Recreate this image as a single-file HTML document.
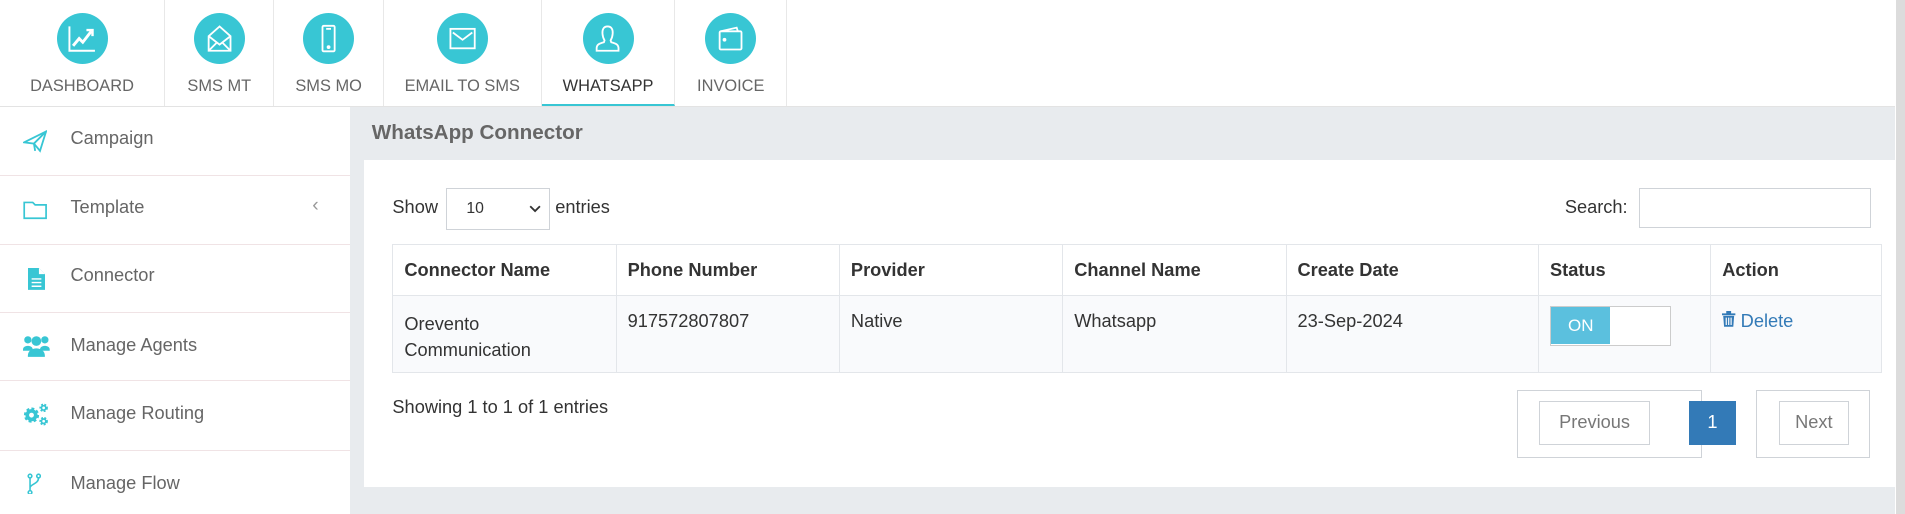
<!DOCTYPE html>
<html><head><meta charset="utf-8"><style>
html,body{margin:0;padding:0;}
body{width:1568px;height:423px;zoom:1.21492;overflow:hidden;position:relative;font-family:"Liberation Sans",Arial,sans-serif;background:#fff;}
.abs{position:absolute;}
.nav{left:0;top:0;width:1560px;height:87px;border-bottom:1px solid #e3e3e3;background:#fff;}
.tab{position:absolute;top:0;height:87px;border-right:1px solid #e8e8e8;text-align:center;}
.tab .c{position:absolute;left:50%;top:11px;width:42px;height:42px;margin-left:-21px;border-radius:50%;background:#38c6d4;}
.tab .c svg{position:absolute;left:9px;top:9px;}
.tab .l{position:absolute;left:0;right:0;top:63px;font-size:13.5px;color:#666;}
.side{left:0;top:88px;width:288px;height:335px;background:#fff;border-right:1px solid #e3e3e3;}
.it{position:absolute;left:0;width:288px;border-bottom:1px solid #f0e3e5;}
.it span{position:absolute;left:58px;font-size:15px;color:#666;}
.it svg{position:absolute;left:19px;}
.main{left:288px;top:88px;width:1272px;height:335px;background:#e8ebee;}
.panel{left:300px;top:132px;width:1260px;height:269px;background:#fff;}
.t{font-size:15px;color:#333;position:absolute;}
table{position:absolute;left:323px;top:201px;width:1226px;border-collapse:collapse;font-size:15px;color:#333;}
td,th{border:1px solid #e3e6ea;text-align:left;vertical-align:top;padding:0 9px;}
th{height:41px;vertical-align:middle;font-weight:bold;}
tbody td{background:#f9fafc;height:63px;padding-top:12px;box-sizing:border-box;line-height:22px;}
.box{position:absolute;border:1px solid #cfd3d8;box-sizing:border-box;}
</style></head><body>
<div class="abs nav">
 <div class="tab" style="left:0;width:135px"><div class="c"><svg width="24" height="24" viewBox="0 0 24 24" fill="none" stroke="#fff" stroke-width="1.6"><path d="M2 2V22H23"/><path d="M5 18L10 12L13 15L20 6" stroke-width="2.4"/><path d="M16 5H21V10" stroke-width="2"/></svg></div><div class="l">DASHBOARD</div></div>
 <div class="tab" style="left:136px;width:89px"><div class="c"><svg width="24" height="24" viewBox="0 0 24 24" fill="none" stroke="#fff" stroke-width="1.5"><path d="M3 10L12 2L21 10V22H3Z"/><path d="M3 10L12 17L21 10M3 22L10 15M21 22L14 15"/></svg></div><div class="l">SMS MT</div></div>
 <div class="tab" style="left:226px;width:89px"><div class="c"><svg width="24" height="24" viewBox="0 0 24 24" fill="none" stroke="#fff" stroke-width="1.5"><rect x="7" y="1.5" width="10" height="21" rx="1"/><path d="M10 4H14"/><circle cx="12" cy="19" r="0.8" fill="#fff"/></svg></div><div class="l">SMS MO</div></div>
 <div class="tab" style="left:316px;width:129px"><div class="c"><svg width="24" height="24" viewBox="0 0 24 24" fill="none" stroke="#fff" stroke-width="1.5"><rect x="2" y="4" width="20" height="16"/><path d="M4 7L12 13L20 7"/></svg></div><div class="l">EMAIL TO SMS</div></div>
 <div class="tab" style="left:446px;width:109px;border-bottom:2px solid #38c6d4;height:86px"><div class="c"><svg width="24" height="24" viewBox="0 0 24 24" fill="none" stroke="#fff" stroke-width="1.5"><path d="M12 2C8.5 2 7.5 5 7.8 8C8 11 9.5 13.5 9.5 13.5L9 15C5 16 3 17 3 20V22H21V20C21 17 19 16 15 15L14.5 13.5C14.5 13.5 16 11 16.2 8C16.5 5 15.5 2 12 2Z"/></svg></div><div class="l" style="color:#333">WHATSAPP</div></div>
 <div class="tab" style="left:556px;width:91px"><div class="c"><svg width="24" height="24" viewBox="0 0 24 24" fill="none" stroke="#fff" stroke-width="1.5"><path d="M4 6L17 3L18 6"/><rect x="3" y="6" width="18" height="15" rx="1"/><circle cx="7" cy="13" r="0.8" fill="#fff"/></svg></div><div class="l">INVOICE</div></div>
</div>
<div class="abs side">
 <div class="it" style="top:0;height:56px"><svg style="top:18px" width="20" height="20" viewBox="0 0 20 20" fill="none" stroke="#38c6d4" stroke-width="1.5"><path d="M1 11L19 2L14 18L9 12Z"/><path d="M9 12L19 2M9 12L10 18"/></svg><span style="top:17px">Campaign</span></div>
 <div class="it" style="top:57px;height:56px"><svg style="top:20px" width="20" height="16" viewBox="0 0 20 16" fill="none" stroke="#38c6d4" stroke-width="1.4"><path d="M1 2H8L10 4H19V15H1Z"/></svg><span style="top:17px">Template</span><span style="left:257px;top:15px;color:#999;font-size:16px">&#8249;</span></div>
 <div class="it" style="top:114px;height:55px"><svg style="top:19px;left:23px" width="14" height="18" viewBox="0 0 14 18"><path d="M0 0H9L14 5V18H0Z" fill="#38c6d4"/><path d="M9 0V5H14" fill="#fff"/><path d="M3 9H11M3 12H11M3 15H11" stroke="#fff" stroke-width="1.2"/></svg><span style="top:16px">Connector</span></div>
 <div class="it" style="top:170px;height:55px"><svg style="top:18px" width="22" height="18" viewBox="0 0 22 18" fill="#38c6d4"><circle cx="4" cy="4" r="3"/><circle cx="18" cy="4" r="3"/><circle cx="11" cy="5" r="4"/><path d="M0 12C0 8 8 8 8 12V13H0Z"/><path d="M14 12C14 8 22 8 22 12V13H14Z"/><path d="M4 17C4 9 18 9 18 17V18H4Z"/></svg><span style="top:18px">Manage Agents</span></div>
 <div class="it" style="top:226px;height:56px"><svg style="top:18px" width="22" height="20" viewBox="0 0 22 20" fill="none" stroke="#38c6d4"><circle cx="7" cy="10" r="4.5" stroke-width="3.5" stroke-dasharray="2 1.5"/><circle cx="7" cy="10" r="3.5" stroke-width="3"/><circle cx="17" cy="4" r="2.5" stroke-width="2" stroke-dasharray="1.4 1"/><circle cx="17" cy="4" r="1.8" stroke-width="1.4"/><circle cx="17" cy="15" r="2.5" stroke-width="2" stroke-dasharray="1.4 1"/><circle cx="17" cy="15" r="1.8" stroke-width="1.4"/></svg><span style="top:18px">Manage Routing</span></div>
 <div class="it" style="top:283px;height:52px;border:none"><svg style="top:18px;left:22px" width="12" height="18" viewBox="0 0 12 18" fill="none" stroke="#38c6d4" stroke-width="1.3"><circle cx="2.5" cy="2.5" r="1.5"/><circle cx="9.5" cy="2.5" r="1.5"/><circle cx="2.5" cy="16" r="1.5"/><path d="M2.5 4V14.5M9.5 4C9.5 9 3 9 2.5 12"/></svg><span style="top:18px">Manage Flow</span></div>
</div>
<div class="abs" style="left:1561px;top:0;width:7px;height:423px;background:#dcdcdc"></div>
<div class="abs main"></div>
<div class="abs" style="left:306px;top:100px;font-size:17px;font-weight:bold;color:#666">WhatsApp Connector</div>
<div class="abs panel"></div>
<div class="t" style="left:323px;top:162px">Show</div>
<div class="box" style="left:367px;top:155px;width:86px;height:34px;"><span style="position:absolute;left:16px;top:9px;font-size:13px;color:#333">10</span><svg style="position:absolute;left:68px;top:13px" width="10" height="7" viewBox="0 0 10 7" fill="none" stroke="#333" stroke-width="1.5"><path d="M1 1L5 5L9 1"/></svg></div>
<div class="t" style="left:457px;top:162px">entries</div>
<div class="t" style="left:1288px;top:162px">Search:</div>
<div class="box" style="left:1349px;top:155px;width:191px;height:33px"></div>
<table>
<thead><tr><th style="width:165px">Connector Name</th><th style="width:165px">Phone Number</th><th style="width:165px">Provider</th><th style="width:165px">Channel Name</th><th style="width:189px">Create Date</th><th style="width:123px">Status</th><th>Action</th></tr></thead>
<tbody><tr><td>Orevento<br>Communication</td><td style="padding-top:10px">917572807807</td><td style="padding-top:10px">Native</td><td style="padding-top:10px">Whatsapp</td><td style="padding-top:10px">23-Sep-2024</td><td style="padding-top:8px"><div style="position:relative;width:100px;height:33px;border:1px solid #ccc;background:#fff;box-sizing:border-box"><div style="position:absolute;left:0;top:0;width:49px;height:31px;background:#5bc0de;color:#fff;font-size:14px;text-align:center;line-height:31px">ON</div></div></td><td style="padding-top:10px;color:#337ab7"><svg width="11" height="13" viewBox="0 0 11 13" fill="#337ab7"><path d="M0 2H11V3.5H0ZM3.5 0H7.5V2H3.5Z"/><path d="M1 4H10L9.3 13H1.7ZM3 5.5V11.5H4V5.5ZM5 5.5V11.5H6V5.5ZM7 5.5V11.5H8V5.5Z" fill-rule="evenodd"/></svg> Delete</td></tr></tbody>
</table>
<div class="t" style="left:323px;top:327px">Showing 1 to 1 of 1 entries</div>
<div class="box" style="left:1249px;top:321px;width:152px;height:56px"></div>
<div class="box" style="left:1267px;top:330px;width:91px;height:36px;color:#777;font-size:15px;text-align:center;line-height:34px">Previous</div>
<div class="abs" style="left:1390px;top:330px;width:39px;height:36px;background:#337ab7;color:#fff;font-size:15px;text-align:center;line-height:36px">1</div>
<div class="box" style="left:1445px;top:321px;width:94px;height:56px"></div>
<div class="box" style="left:1464px;top:330px;width:58px;height:36px;color:#777;font-size:15px;text-align:center;line-height:34px">Next</div>
</body></html>
